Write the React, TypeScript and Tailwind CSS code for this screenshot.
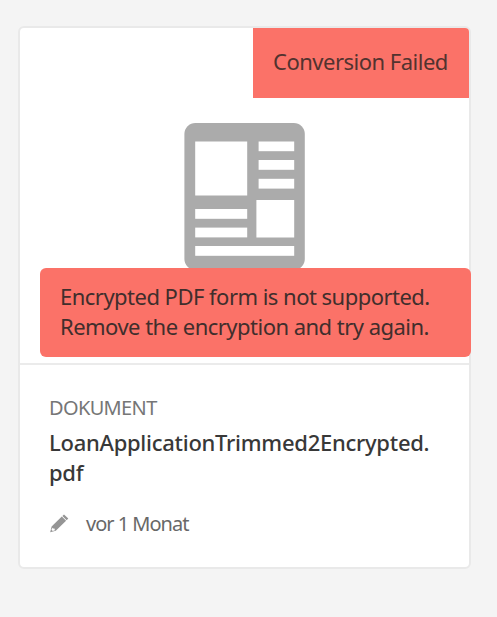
function DocumentIcon() {
  return (
    <svg className="block h-[148px] w-[121px]" viewBox="184 123 121 148" fill="white" aria-hidden="true">
      <rect x="184.4" y="123" width="120.4" height="147" rx="11" fill="#ababab" />
      <rect x="195.2" y="141.5" width="52" height="54" />
      <rect x="258.6" y="141.5" width="35.6" height="9.7" />
      <rect x="258.6" y="160" width="35.6" height="9.8" />
      <rect x="258.6" y="178.8" width="35.6" height="9.8" />
      <rect x="256.4" y="200" width="37.8" height="37.5" />
      <rect x="195.2" y="209" width="52" height="9.8" />
      <rect x="195.2" y="227.6" width="52" height="9.8" />
      <rect x="195.2" y="246" width="99" height="9.8" />
    </svg>
  );
}

function PencilIcon() {
  return (
    <svg className="block h-5 w-5 shrink-0" viewBox="0 0 20 20" aria-hidden="true">
      <path
        fill="#959595"
        fillRule="evenodd"
        d="M15 0.4 19.3 4.6 17.7 6.2 13.4 2ZM12.8 2.6 17.1 6.8 6.8 16.8 1.2 18.2 2.6 12.6ZM3.4 13.7 2.4 15.8 3.8 17.1 5.9 16.2 5.5 14.6 4 14.4Z"
      />
    </svg>
  );
}

export default function App() {
  return (
    <main className="h-[617px] w-[497px] overflow-hidden bg-[#f4f4f4] pt-[26px] pl-[18px] font-['Noto_Sans',sans-serif] whitespace-nowrap">
      <article className="relative h-[543px] w-[453px] rounded-[6px] border-2 border-[#e9e9e9] bg-white">
        <div className="flex h-[337px] justify-center border-b-2 border-[#ebebeb] pt-[95px]">
          <DocumentIcon />
        </div>
        <div className="absolute top-0 right-0 flex h-[70px] w-[216px] items-center rounded-tr-[4px] bg-[#fb7268] pb-[4px] pl-[20px] text-[22px] leading-[30px] tracking-[-0.5px] text-[#52332f]">
          <span>Conversion Failed</span>
        </div>
        <div className="absolute top-[240px] left-[20px] h-[89px] w-[431px] rounded-[6px] bg-[#fb7268] pt-[13px] pl-[20px] text-[22px] leading-[30px] tracking-[-0.52px] text-[#402e2c]">
          <p>Encrypted PDF form is not supported.</p>
          <p>Remove the encryption and try again.</p>
        </div>
        <div className="pt-[29px] pl-[29px]">
          <p className="text-[20px] leading-[28px] tracking-[-0.65px] text-[#767676]">DOKUMENT</p>
          <h2 className="mt-[5px] text-[22px] leading-[30px] font-medium tracking-[-0.27px] text-[#383838]">
            <span className="block">LoanApplicationTrimmed2Encrypted.</span>
            <span className="block">pdf</span>
          </h2>
          <div className="mt-[23px] flex h-[28px] items-center gap-[17px] text-[20px] leading-[28px] tracking-[-1px] text-[#686868]">
            <PencilIcon />
            <time>vor 1 Monat</time>
          </div>
        </div>
      </article>
    </main>
  );
}
